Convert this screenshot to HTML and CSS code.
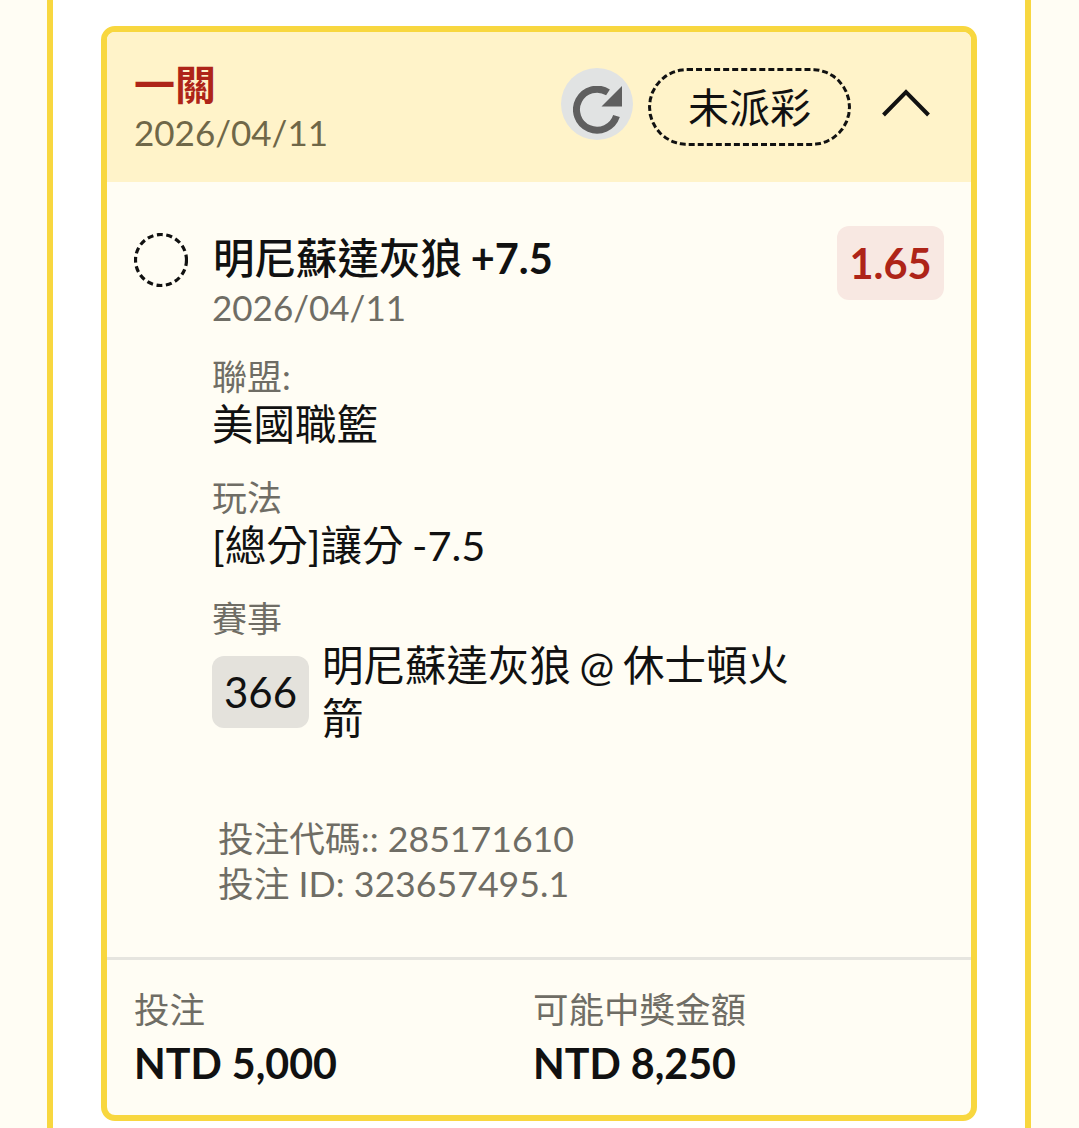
FILE: index.html
```html
<!DOCTYPE html>
<html lang="zh-Hant">
<head>
<meta charset="utf-8">
<title>投注</title>
<link rel="stylesheet" href="styles.css">
</head>
<body>
<div class="frame">
  <section class="card">
    <header class="head">
      <div class="head-text">
        <div class="type">一關</div>
        <div class="head-date">2026/04/11</div>
      </div>
      <div class="head-actions">
        <button class="refresh" aria-label="refresh">
          <svg viewBox="0 0 50 48" width="50" height="48"><path d="M43.500 30A20.500 20.500 0 1 1 35 6.400" fill="none" stroke="#5f5f5f" stroke-width="7"/><path d="M49 0V20.500H28.500Z" fill="#5f5f5f"/></svg>
        </button>
        <div class="status">未派彩</div>
        <svg class="chev" viewBox="0 0 48 28" width="48" height="28"><path d="M1.500 26 24 3 46.500 26" fill="none" stroke="#111" stroke-width="4"/></svg>
      </div>
    </header>
    <div class="body">
      <div class="sel">
        <svg class="ring" viewBox="0 0 54 54" width="54" height="54"><circle cx="27" cy="27" r="25.500" fill="none" stroke="#111" stroke-width="3.200" stroke-dasharray="6 3.600"/></svg>
        <div class="sel-main">
          <div class="sel-name"><span class="team">明尼蘇達灰狼</span> <span class="line">+7.5</span></div>
          <div class="sel-date">2026/04/11</div>
          <div class="field">
            <div class="label">聯盟:</div>
            <div class="value">美國職籃</div>
          </div>
          <div class="field">
            <div class="label">玩法</div>
            <div class="value">[總分]讓分 -7.5</div>
          </div>
          <div class="field">
            <div class="label">賽事</div>
            <div class="match">
              <span class="num">366</span>
              <span class="match-name">明尼蘇達灰狼 @ 休士頓火箭</span>
            </div>
          </div>
        </div>
        <div class="odds">1.65</div>
      </div>
      <div class="ids">
        <div>投注代碼:: 285171610</div>
        <div>投注 ID: 323657495.1</div>
      </div>
    </div>
    <footer class="foot">
      <div class="foot-col">
        <div class="foot-label">投注</div>
        <div class="foot-val">NTD 5,000</div>
      </div>
      <div class="foot-col">
        <div class="foot-label">可能中獎金額</div>
        <div class="foot-val">NTD 8,250</div>
      </div>
    </footer>
  </section>
</div>
</body>
</html>
```
FILE: styles.css
```css
* { box-sizing: border-box; }
html, body { margin: 0; height: 1128px; overflow: hidden; }
body {
  background: #fffdf4;
  font-family: Lato, "Noto Sans CJK TC", sans-serif;
  color: #111;
  padding: 0 48px 0 47px;
}
.frame {
  height: 1128px;
  background: #fff;
  border-left: 6px solid #f8d73f;
  border-right: 6px solid #f8d73f;
  padding: 26px 48px 0 48px;
}
.card {
  height: 1095px;
  border: 6px solid #f8d73f;
  border-radius: 14px;
  background: #fffdf4;
  display: flex;
  flex-direction: column;
  overflow: hidden;
}
.head {
  height: 150px;
  background: #fff3c9;
  padding: 28px 41px 0 27px;
  display: flex;
  justify-content: space-between;
  flex: none;
}
.type { font-size: 41px; line-height: 49px; font-weight: 700; color: #ae2418; }
.head-date { font-size: 35px; line-height: 46px; color: #6f6748; }
.head-actions { display: flex; align-items: flex-start; margin-top: 8px; }
.refresh {
  width: 72px; height: 72px; border: 0; border-radius: 50%; padding: 12px 0 0 12px;
  background: #e1e3e3; display: block;
}
.refresh svg { display: block; }
.status {
  width: 203px; height: 78px; margin-left: 15px;
  border: 3px dashed #111; border-radius: 39px;
  display: flex; align-items: center; justify-content: center;
  font-size: 41px; line-height: 1;
}
.chev { margin: 21px 0 0 31px; }
.body { flex: 1; padding: 44px 27px 0 27px; }
.sel { display: flex; align-items: flex-start; }
.ring { flex: none; margin-top: 7px; }
.sel-main { width: 598px; margin-left: 24px; }
.sel-name { font-size: 41.500px; line-height: 54px; color: #111; margin: 5px 0 0 1px; word-spacing: -2px; }
.team { font-weight: 500; }
.line { font-weight: 700; }
.sel-date { font-size: 35px; line-height: 44px; color: #6f6d65; }
.field { margin-top: 25px; }
.label { font-size: 35px; line-height: 44px; color: #6f6d65; }
.value { font-size: 41.500px; line-height: 52px; word-spacing: -2px; }
.match { display: flex; align-items: flex-start; margin-top: -1px; }
.num {
  flex: none; width: 97px; height: 72px; border-radius: 12px; background: #e4e2dc;
  display: flex; align-items: center; justify-content: center;
  font-size: 42px; margin-top: 17px;
}
.match-name { font-size: 41.500px; line-height: 53px; margin-left: 13px; width: 480px; word-spacing: -2px; }
.odds {
  flex: none; width: 107px; height: 74px; margin-left: auto;
  background: #f8e8e2; border-radius: 12px; color: #ae2418;
  display: flex; align-items: center; justify-content: center;
  font-size: 41.500px; font-weight: 700;
}
.ids { margin: 71px 0 0 84px; font-size: 35.700px; line-height: 45px; color: #6f6d65; }
.foot {
  height: 158px; flex: none; border-top: 3px solid #e6e5df;
  display: flex; padding: 25px 27px 0 27px;
}
.foot-col { width: 399px; }
.foot-label { font-size: 35.500px; line-height: 49px; color: #6f6d65; }
.foot-val { font-size: 41.200px; line-height: 56px; font-weight: 700; color: #111; margin-top: 1px; }
```
